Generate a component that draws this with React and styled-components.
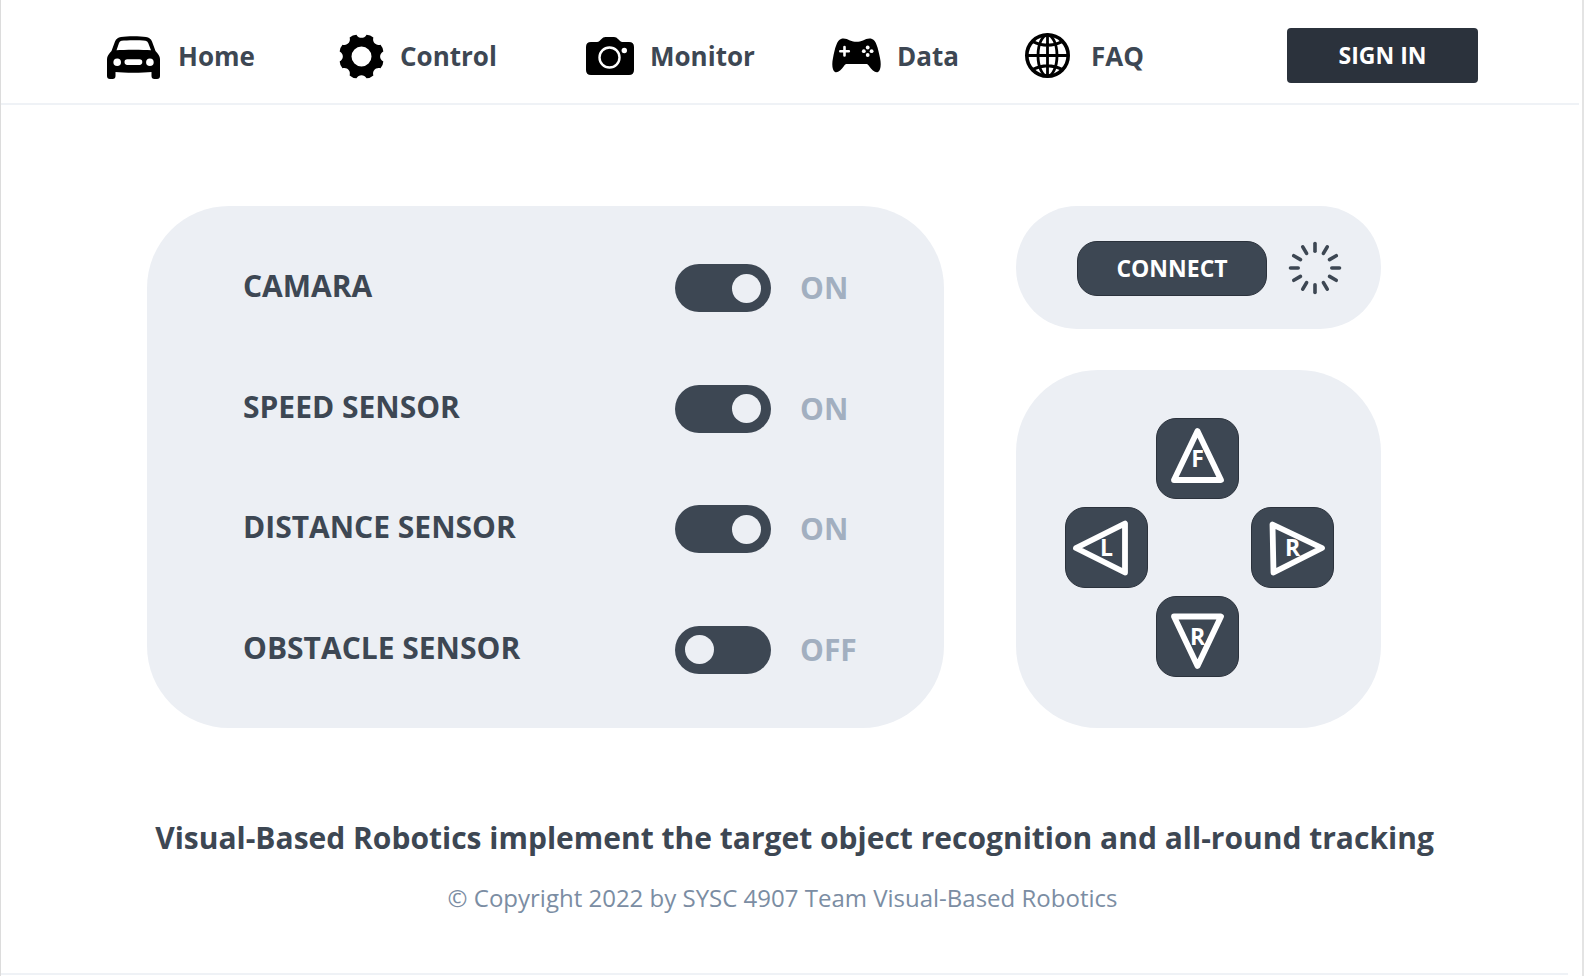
import React, { useState } from "react";
import styled, { createGlobalStyle } from "styled-components";

const color = {
  slate: "#3d4753",
  ink: "#2b323c",
  panel: "#eceff4",
  muted: "#a2afc0",
  caption: "#7b8da3",
  rule: "#eff2f6",
};

const GlobalStyle = createGlobalStyle`
  *, *::before, *::after { box-sizing: border-box; }
  body {
    margin: 0;
    background: #fff;
    color: ${color.slate};
    font-family: "Open Sans", "Noto Sans", sans-serif;
  }
  button, input { font: inherit; }
`;

const Page = styled.div`
  display: flex;
  flex-direction: column;
  min-height: 100vh;
  border-left: 1px solid #dcdcdc;
  border-right: 2px solid #e4e4e4;
`;

const Header = styled.header`
  display: grid;
  grid-template-columns: 1180fr 191fr;
  align-items: center;
  height: 105px;
  margin-right: 3px;
  padding: 8px 101px 0 106px;
  border-bottom: 2px solid ${color.rule};
`;

const Nav = styled.nav`
  display: grid;
  grid-template-columns: 232fr 247fr 246fr 193fr 262fr;
  align-items: center;
`;

const NavLink = styled.a`
  display: flex;
  align-items: center;
  gap: 16px;
  color: ${color.slate};
  font-size: 26px;
  font-weight: 700;
  line-height: 36px;
  text-decoration: none;

  svg {
    flex: none;
    color: #000;
  }
`;

const SignIn = styled.button`
  height: 55px;
  padding-bottom: 2px;
  border: 0;
  border-radius: 4px;
  background: ${color.ink};
  color: #fff;
  font-size: 23px;
  font-weight: 700;
  cursor: pointer;
`;

const Main = styled.main`
  display: grid;
  grid-template-columns: 797fr 365fr;
  gap: 72px;
  padding: 101px 201px 0 146px;
`;

const Panel = styled.section`
  border-radius: ${(p) => p.$radius || 82}px;
  background: ${color.panel};
`;

const SensorPanel = styled(Panel)`
  display: flex;
  flex-direction: column;
  justify-content: space-between;
  padding: 58px 0 54px 96px;
`;

const SensorRow = styled.div`
  display: grid;
  grid-template-columns: 1fr 96px 144px;
  align-items: center;
  column-gap: 29px;
  height: 48px;
  font-size: 30px;
  font-weight: 700;
  line-height: 42px;
`;

const SensorLabel = styled.label`
  padding-bottom: 4px;
`;

const SensorState = styled.span`
  color: ${color.muted};
`;

const Switch = styled.input`
  appearance: none;
  display: flex;
  align-items: center;
  width: 96px;
  height: 48px;
  margin: 0;
  padding: 0 10px;
  border-radius: 24px;
  background: ${color.slate};
  cursor: pointer;

  &::before {
    content: "";
    width: 29px;
    height: 29px;
    border-radius: 50%;
    background: ${color.panel};
  }

  &:checked {
    justify-content: flex-end;
  }
`;

const Side = styled.div`
  display: grid;
  grid-template-rows: 123px 358px;
  gap: 41px;
`;

const ConnectPanel = styled(Panel)`
  display: flex;
  align-items: center;
  justify-content: flex-end;
  gap: 21px;
  padding: 1px 39px 0 0;
`;

const Key = styled.button`
  border: 1px solid ${color.ink};
  border-radius: 20px;
  background: ${color.slate};
  color: #fff;
  font-size: 23px;
  font-weight: 700;
  cursor: pointer;
`;

const ConnectKey = styled(Key)`
  width: 190px;
  height: 55px;
  padding-bottom: 2px;
`;

const PadPanel = styled(Panel)`
  display: grid;
  grid-template-columns: 91px 95px 83px;
  grid-template-rows: repeat(3, 81px);
  grid-template-areas:
    ". up ."
    "left . right"
    ". down .";
  row-gap: 8px;
  place-content: center;
  padding: 0 0 3px 2px;
`;

const PadKey = styled(Key)`
  position: relative;
  grid-area: ${(p) => p.$area};
  width: 83px;
  padding: 0 0 2px;

  svg {
    position: absolute;
    top: -1px;
    left: -1px;
  }
`;

const Footer = styled.footer`
  display: flex;
  flex: 1;
  flex-direction: column;
  align-items: center;
  margin: 0 14px 1px 0;
  padding: 89px 4px 0 0;
  border-bottom: 2px solid ${color.rule};
  text-align: center;
`;

const Tagline = styled.p`
  margin: 0 0 0 24px;
  font-size: 30px;
  font-weight: 700;
  line-height: 42px;
`;

const Copyright = styled.p`
  margin: 21px 0 0;
  color: ${color.caption};
  font-size: 24px;
  line-height: 36px;
`;

function CarIcon() {
  return (
    <svg width="55" height="46" viewBox="0 -3 55 46" fill="currentColor" aria-hidden="true">
      <path
        fillRule="evenodd"
        d="M14 1C20 0 33 0 39 1C42 1.4 44 3 45 5.5L48.5 15C51 18 53 20 53 23V40Q53 43 50 43H47.5Q44.5 43 44.5 40V36C36 37 17 37 8.5 36V40Q8.5 43 5.5 43H3Q0 43 0 40V23C0 20 2 18 4.5 15L8 5.5C9 3 11 1.4 14 1Z
           M14.5 4.8C20 4 33 4 38.5 4.8Q40.5 5 41.2 7L44 14.2C36 13.5 17 13.5 9.5 14.2L12 7Q12.7 5 14.5 4.8Z
           M10.2 22.4a3.8 3.8 0 1 0 0 7.6a3.8 3.8 0 1 0 0-7.6Z
           M42.9 22.4a3.8 3.8 0 1 0 0 7.6a3.8 3.8 0 1 0 0-7.6Z
           M20.3 23.3H32.5a2.8 2.8 0 0 1 0 5.6H20.3a2.8 2.8 0 0 1 0-5.6Z"
      />
    </svg>
  );
}

const polar = (radius, degrees) => {
  const a = (degrees * Math.PI) / 180;
  return `${(22.5 + radius * Math.sin(a)).toFixed(2)} ${(22.5 - radius * Math.cos(a)).toFixed(2)}`;
};

const gearOutline =
  Array.from({ length: 8 }, (_, i) => {
    const a = i * 45;
    return `${i ? "L" : "M"}${polar(22.4, a - 13)}C${polar(17.8, a - 9)} ${polar(17.8, a + 9)} ${polar(22.4, a + 13)}Q${polar(23.4, a + 22.5)} ${polar(22.4, a + 32)}`;
  }).join("") + "Z";

function GearIcon() {
  return (
    <svg width="45" height="47" viewBox="0 -2 45 47" fill="currentColor" aria-hidden="true">
      <path fillRule="evenodd" d={`${gearOutline}M22.5 12.5a10 10 0 1 0 0 20a10 10 0 1 0 0-20Z`} />
    </svg>
  );
}

function CameraIcon() {
  return (
    <svg width="48" height="38" viewBox="0 0 48 38" fill="currentColor" aria-hidden="true">
      <path d="M5 5H11C13 5 14 3.5 15.5 2Q17 0 19.5 0H28Q30.5 0 32 2C33.5 3.5 34.5 5 36.5 5H43Q48 5 48 10V33Q48 38 43 38H5Q0 38 0 33V10Q0 5 5 5Z" />
      <circle cx="23.5" cy="20.5" r="10" fill="none" stroke="#fff" strokeWidth="2.4" />
      <circle cx="38.3" cy="13.5" r="2.7" fill="#fff" />
    </svg>
  );
}

function GamepadIcon() {
  return (
    <svg width="49" height="36" viewBox="0 0 49 36" fill="currentColor" aria-hidden="true">
      <path d="M9 1C12 0 15 1 18 2.5C22 4.3 27 4.3 31 2.5C34 1 37 0 40 1C44 2 46 10 48 20C49.5 27 48.5 33 46 34C43 35 40 32 37 28C36 26.5 35.5 26 34 26H15C13.5 26 13 26.5 12 28C9 32 6 35 3 34C.5 33 -.5 27 1 20C3 10 5 2 9 1Z" />
      <path d="M12.5 9V17.5M8.3 13.2H16.8" stroke="#fff" strokeWidth="2.6" strokeLinecap="round" />
      <g fill="#fff">
        <circle cx="35.7" cy="9.5" r="1.9" />
        <circle cx="35.7" cy="17" r="1.9" />
        <circle cx="31.8" cy="13.2" r="1.9" />
        <circle cx="39.6" cy="13.2" r="1.9" />
      </g>
    </svg>
  );
}

function GlobeIcon() {
  return (
    <svg width="50" height="46" viewBox="0 0 50 46" fill="none" stroke="currentColor" strokeWidth="2.8" aria-hidden="true">
      <circle cx="22.5" cy="22.5" r="20.7" strokeWidth="3.6" />
      <ellipse cx="22.5" cy="22.5" rx="9.5" ry="20.5" />
      <path d="M22.5 2V43M2 22.5H43M7.5 8.5Q22.5 16 37.5 8.5M7.5 36.5Q22.5 29 37.5 36.5" />
    </svg>
  );
}

function Spinner() {
  return (
    <svg width="54" height="54" viewBox="-27 -27 54 54" stroke={color.slate} strokeWidth="3.6" strokeLinecap="round" role="img" aria-label="Connecting">
      {Array.from({ length: 12 }, (_, i) => (
        <line key={i} x1="0" y1="-16.8" x2="0" y2="-24.5" transform={`rotate(${i * 30})`} />
      ))}
    </svg>
  );
}

const navItems = [
  { label: "Home", Icon: CarIcon },
  { label: "Control", Icon: GearIcon },
  { label: "Monitor", Icon: CameraIcon },
  { label: "Data", Icon: GamepadIcon },
  { label: "FAQ", Icon: GlobeIcon },
];

const sensors = [
  { id: "camera", label: "CAMARA", on: true },
  { id: "speed", label: "SPEED SENSOR", on: true },
  { id: "distance", label: "DISTANCE SENSOR", on: true },
  { id: "obstacle", label: "OBSTACLE SENSOR", on: false },
];

const padKeys = [
  { area: "up", letter: "F", name: "Forward", points: "41.5,13 65,62 18,62" },
  { area: "left", letter: "L", name: "Left", points: "11,41 60,16.5 60,65.5" },
  { area: "right", letter: "R", name: "Right", points: "71,41 21.5,17.5 22.5,65.5" },
  { area: "down", letter: "R", name: "Reverse", points: "41.5,70 65,20.5 18,20.5" },
];

function Sensor({ id, label, on }) {
  const [checked, setChecked] = useState(on);
  return (
    <SensorRow>
      <SensorLabel htmlFor={id}>{label}</SensorLabel>
      <Switch id={id} type="checkbox" role="switch" checked={checked} onChange={(e) => setChecked(e.target.checked)} />
      <SensorState>{checked ? "ON" : "OFF"}</SensorState>
    </SensorRow>
  );
}

export default function App() {
  return (
    <Page>
      <GlobalStyle />
      <Header>
        <Nav>
          {navItems.map(({ label, Icon }) => (
            <NavLink key={label} href={`#${label.toLowerCase()}`}>
              <Icon />
              {label}
            </NavLink>
          ))}
        </Nav>
        <SignIn type="button">SIGN IN</SignIn>
      </Header>
      <Main>
        <SensorPanel>
          {sensors.map((s) => (
            <Sensor key={s.id} {...s} />
          ))}
        </SensorPanel>
        <Side>
          <ConnectPanel $radius={61}>
            <ConnectKey type="button">CONNECT</ConnectKey>
            <Spinner />
          </ConnectPanel>
          <PadPanel>
            {padKeys.map((k) => (
              <PadKey key={k.area} type="button" $area={k.area} title={k.name}>
                <svg width="83" height="82" viewBox="0 0 83 82" fill="none" stroke="#fff" strokeWidth="5.8" strokeLinejoin="round" aria-hidden="true">
                  <polygon points={k.points} />
                </svg>
                {k.letter}
              </PadKey>
            ))}
          </PadPanel>
        </Side>
      </Main>
      <Footer>
        <Tagline>Visual-Based Robotics implement the target object recognition and all-round tracking</Tagline>
        <Copyright>© Copyright 2022 by SYSC 4907 Team Visual-Based Robotics</Copyright>
      </Footer>
    </Page>
  );
}
